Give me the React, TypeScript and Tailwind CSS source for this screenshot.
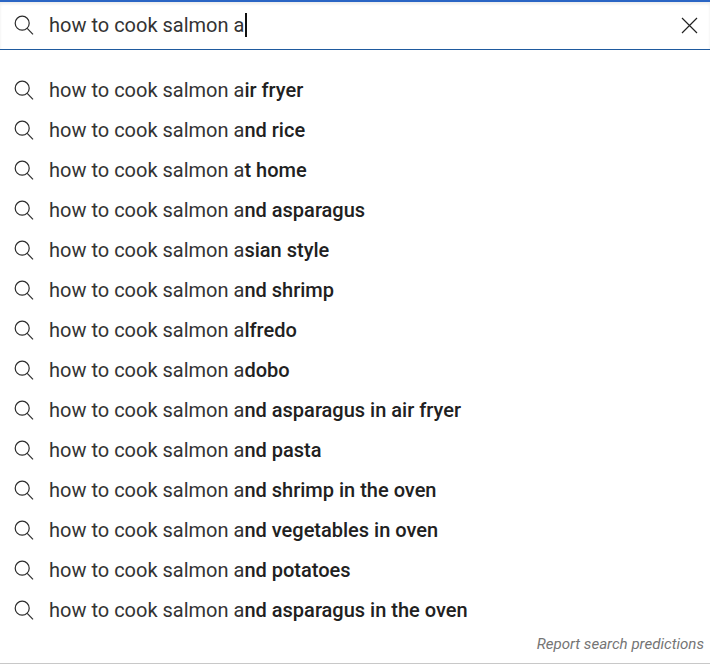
import React from 'react';

const suggestions = [
  { typed: 'how to cook salmon a', rest: 'ir fryer' },
  { typed: 'how to cook salmon a', rest: 'nd rice' },
  { typed: 'how to cook salmon a', rest: 't home' },
  { typed: 'how to cook salmon a', rest: 'nd asparagus' },
  { typed: 'how to cook salmon a', rest: 'sian style' },
  { typed: 'how to cook salmon a', rest: 'nd shrimp' },
  { typed: 'how to cook salmon a', rest: 'lfredo' },
  { typed: 'how to cook salmon a', rest: 'dobo' },
  { typed: 'how to cook salmon a', rest: 'nd asparagus in air fryer' },
  { typed: 'how to cook salmon a', rest: 'nd pasta' },
  { typed: 'how to cook salmon a', rest: 'nd shrimp in the oven' },
  { typed: 'how to cook salmon a', rest: 'nd vegetables in oven' },
  { typed: 'how to cook salmon a', rest: 'nd potatoes' },
  { typed: 'how to cook salmon a', rest: 'nd asparagus in the oven' },
];

const SearchIcon = () => (
  <svg width="20" height="20" viewBox="0 0 20 20" fill="none" stroke="#2b2b2b" strokeWidth="1.2" className="shrink-0">
    <circle cx="8.2" cy="8.2" r="7" />
    <path d="M13.2 13.4 L19 19.4" />
  </svg>
);

const App = () => {
  return (
    <div className="w-[710px] h-[664px] bg-white overflow-hidden flex flex-col font-['Roboto',sans-serif] border-b border-[#c8c8c8]">
      <div className="h-[50px] shrink-0 flex items-center pl-[14px] pr-[12px] pb-[1px] border-t-2 border-b border-t-[#2a65c4] border-b-[#1f5a9e] shadow-[inset_0_2px_3px_rgba(0,0,0,0.08)]">
        <SearchIcon />
        <div className="ml-[15px] flex items-center flex-1 text-[20px] text-[#333333]">
          <span>how to cook salmon a</span>
          <span className="w-[2px] h-[24px] bg-[#111111] ml-[0.5px]"></span>
        </div>
        <svg width="18" height="18" viewBox="0 0 18 18" stroke="#222222" strokeWidth="1.2" fill="none">
          <path d="M2 2 L17 17 M17 2 L2 17" />
        </svg>
      </div>
      <div className="pt-[20px] flex-1">
        {suggestions.map((s, index) => (
          <div key={index} className="h-[40px] flex items-center pl-[14px]">
            <SearchIcon />
            <span className="ml-[15px] text-[20px] text-[#333333] whitespace-pre">
              {s.typed}
              <span className="font-medium text-[#212121]">{s.rest}</span>
            </span>
          </div>
        ))}
        <div className="flex justify-end pr-[6px] pt-[3px] text-[15.1px] italic text-[#757575]">
          Report search predictions
        </div>
      </div>
    </div>
  );
};

export default App;
